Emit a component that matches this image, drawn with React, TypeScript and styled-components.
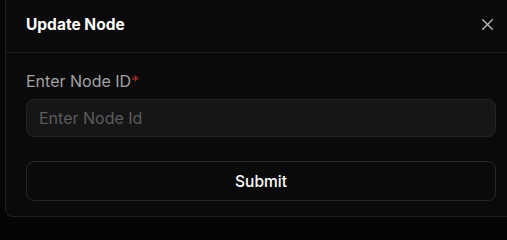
import React from 'react';
import styled, { createGlobalStyle } from 'styled-components';
import { X } from 'lucide-react';

const GlobalStyle = createGlobalStyle`
  html, body {
    margin: 0;
    padding: 0;
    background: #050505;
    overflow: hidden;
    font-family: Inter, "Noto Sans", sans-serif;
  }
`;

const Backdrop = styled.div`
  width: 507px;
  height: 220px;
  overflow: hidden;
  background: #050505;
`;

const Modal = styled.div`
  width: 512px;
  margin-left: 5px;
  background: #0a0a0a;
  border: 1px solid #1e1e1e;
  border-top: none;
  border-radius: 0 0 8px 8px;
  box-sizing: border-box;
`;

const Header = styled.div`
  height: 53px;
  display: flex;
  align-items: center;
  justify-content: space-between;
  padding: 0 19px 4px 20px;
  box-sizing: border-box;
  border-bottom: 1px solid #1f1f1f;
`;

const Title = styled.h2`
  margin: 0;
  font-size: 15.5px;
  font-weight: 700;
  color: #ffffff;
`;

const CloseButton = styled.button`
  display: flex;
  align-items: center;
  justify-content: center;
  padding: 0;
  background: none;
  border: none;
  color: #b5b5b5;
  cursor: pointer;
`;

const Body = styled.div`
  display: flex;
  flex-direction: column;
  padding: 16px 20px 15px 20px;
`;

const Label = styled.label`
  font-size: 16px;
  line-height: 24px;
  color: #a3a3a3;
  margin-bottom: 6px;
`;

const Required = styled.span`
  color: #b3322c;
  font-weight: 300;
`;

const Input = styled.input`
  height: 38px;
  width: 470px;
  box-sizing: border-box;
  padding: 0 12px;
  background: #161616;
  border: 1px solid #242424;
  border-radius: 8px;
  color: #e5e5e5;
  font-family: inherit;
  font-size: 16px;
  outline: none;

  &::placeholder {
    color: #5c5c5c;
  }
`;

const SubmitButton = styled.button`
  margin-top: 24px;
  height: 40px;
  width: 470px;
  background: #0a0a0a;
  border: 1px solid #262626;
  border-radius: 8px;
  color: #ffffff;
  font-family: inherit;
  font-size: 15.5px;
  font-weight: 500;
  cursor: pointer;
`;

const App: React.FC = () => {
  return (
    <Backdrop>
      <GlobalStyle />
      <Modal>
        <Header>
          <Title>Update Node</Title>
          <CloseButton aria-label="Close">
            <X size={19} strokeWidth={1.8} />
          </CloseButton>
        </Header>
        <Body>
          <Label htmlFor="node-id">
            Enter Node ID<Required>*</Required>
          </Label>
          <Input id="node-id" placeholder="Enter Node Id" />
          <SubmitButton>Submit</SubmitButton>
        </Body>
      </Modal>
    </Backdrop>
  );
};

export default App;
